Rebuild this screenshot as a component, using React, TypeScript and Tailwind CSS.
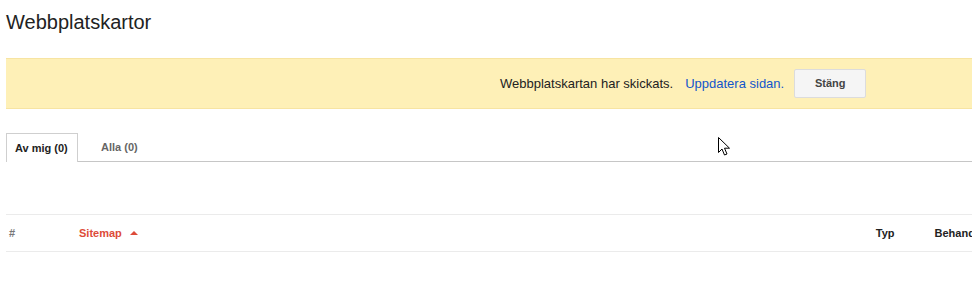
import React from "react";

function Cursor() {
  return (
    <svg className="absolute left-[717px] top-[136px]" width="14" height="21" viewBox="0 0 14 21">
      <path
        d="M1.5 1.5 L1.5 16.5 L5 13 L7.5 19 L10 18 L7.5 12.2 L12.5 12.2 Z"
        fill="#fff"
        stroke="#000"
        strokeWidth="1"
        strokeLinejoin="miter"
      />
    </svg>
  );
}

export default function App() {
  return (
    <div className="relative w-[972px] h-[287px] overflow-hidden bg-white font-['Liberation_Sans',Arial,sans-serif]">
      <div className="w-[1200px] pl-[6px]">
        <h1 className="pt-[10px] text-[20px] leading-[24px] font-normal text-[#222]">Webbplatskartor</h1>
        <div className="mt-[24px] h-[51px] bg-[#fef0b7] border-t border-b border-[#f7e4a2] flex items-center pl-[494px]">
          <span className="text-[13px] text-[#222]">Webbplatskartan har skickats.</span>
          <span className="ml-[12px] text-[13px] text-[#1155cc]">Uppdatera sidan.</span>
          <button className="ml-[10px] w-[72px] h-[29px] rounded-[2px] border border-[#dcdcdc] bg-[#f5f5f5] text-[11px] font-bold text-[#444]">
            Stäng
          </button>
        </div>
        <div className="mt-[24px] flex items-end border-b border-[#c6c6c6] h-[29px]">
          <div className="h-[29px] w-[72px] border border-b-0 border-[#cfcfcf] bg-white -mb-px flex items-center pl-[8px] text-[11px] font-bold text-[#222]">
            Av mig (0)
          </div>
          <div className="h-[28px] ml-[23px] flex items-center text-[11px] font-bold text-[#666]">Alla (0)</div>
        </div>
        <div className="mt-[52px] border-t border-b border-[#ebebeb] h-[38px] flex items-center text-[11px] font-bold">
          <div className="w-[73px] pl-[3px] text-[#777]">#</div>
          <div className="flex items-center text-[#dd4b39]">
            Sitemap
            <svg className="ml-[8px]" width="8" height="4" viewBox="0 0 8 4">
              <path d="M0 4 L4 0 L8 4 Z" fill="#dd4b39" />
            </svg>
          </div>
          <div className="ml-[738px] text-[#222]">Typ</div>
          <div className="ml-[40px] text-[#222]">Behandlade</div>
        </div>
      </div>
      <Cursor />
    </div>
  );
}
